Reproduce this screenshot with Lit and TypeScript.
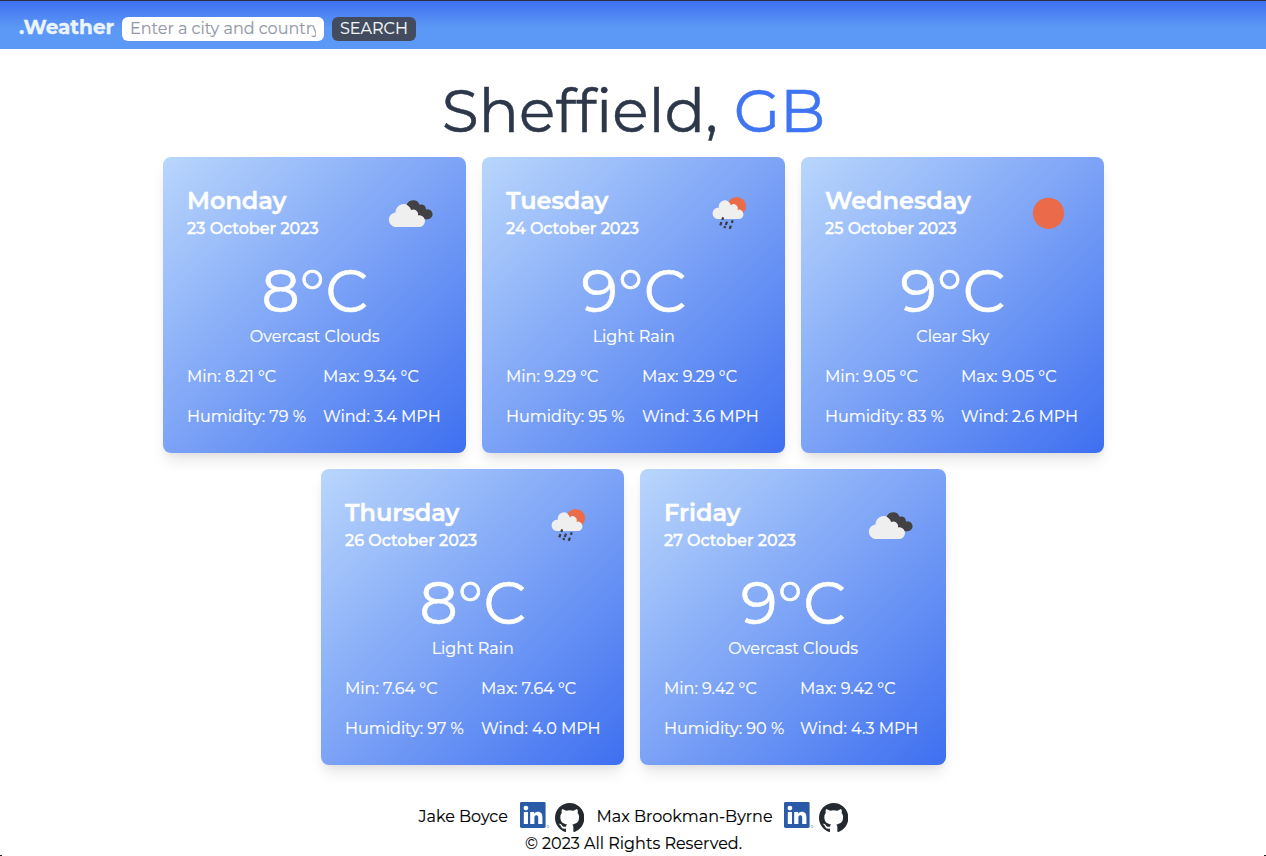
import { LitElement, html, svg, css } from "lit";

interface Day {
  name: string; date: string; temp: string; sky: string; icon: string;
  cells: string[];
}

const DAYS: Day[][] = [
  [
    { name: "Monday", date: "23 October 2023", temp: "8°C", sky: "Overcast Clouds", icon: "clouds",
      cells: ["Min: 8.21 °C", "Max: 9.34 °C", "Humidity: 79 %", "Wind: 3.4 MPH"] },
    { name: "Tuesday", date: "24 October 2023", temp: "9°C", sky: "Light Rain", icon: "rain",
      cells: ["Min: 9.29 °C", "Max: 9.29 °C", "Humidity: 95 %", "Wind: 3.6 MPH"] },
    { name: "Wednesday", date: "25 October 2023", temp: "9°C", sky: "Clear Sky", icon: "sun",
      cells: ["Min: 9.05 °C", "Max: 9.05 °C", "Humidity: 83 %", "Wind: 2.6 MPH"] },
  ],
  [
    { name: "Thursday", date: "26 October 2023", temp: "8°C", sky: "Light Rain", icon: "rain",
      cells: ["Min: 7.64 °C", "Max: 7.64 °C", "Humidity: 97 %", "Wind: 4.0 MPH"] },
    { name: "Friday", date: "27 October 2023", temp: "9°C", sky: "Overcast Clouds", icon: "clouds",
      cells: ["Min: 9.42 °C", "Max: 9.42 °C", "Humidity: 90 %", "Wind: 4.3 MPH"] },
  ],
];

const ICONS: Record<string, unknown> = {
  clouds: svg`<g transform="translate(387.5 198.6)">
    <path fill="#424244" d="M19 7A6.8 6.8 0 0 1 32 6.2A4.6 4.6 0 0 1 38.4 10.9A5 5 0 1 1 39.8 20.6H28Z"/>
    <path fill="#efefef" d="M7.4 28.3A7.2 7.2 0 0 1 8 14A8 8 0 0 1 23.7 11.4A4.7 4.7 0 0 1 30.4 16.7A5.9 5.9 0 1 1 32.8 28.3Z"/></g>`,
  rain: svg`<circle cx="736.7" cy="206.2" r="9.3" fill="#eb6c4a"/>
    <path fill="#efefef" d="M717.6 219A5.6 5.6 0 0 1 718.7 207.8A6.2 6.2 0 0 1 730.9 205.4A4 4 0 0 1 737.4 209.8A4.7 4.7 0 1 1 738.6 219Z"/>
    <g stroke="#3a3a3e" stroke-width="2.2"><path d="M723.2 217.3l-.9 2.6M721.4 222.2l-1.1 3.2M727 221.6l-1.2 3.4M732.7 220.4l-.8 2.4M725.1 226l-.7 2.2M730.9 225.7l-1.2 3.2"/></g>`,
  sun: svg`<circle cx="1048.5" cy="213.3" r="15.6" fill="#ea6a49"/>`,
};
const BOX: Record<string, string> = { clouds: "385 189 50 50", rain: "704 189 50 50", sun: "1023 189 50 50" };

const linkedin = html`<svg class="li" viewBox="0 0 30 30">
  <rect width="25.6" height="26" rx="1.4" fill="#2a5ba9"/>
  <g fill="#fff"><circle cx="5.9" cy="6.1" r="2.4"/><path d="M3.8 10H8V22H3.8ZM10.2 10H14.2V11.7C15 10.4 16.1 9.7 17.8 9.7C21.4 9.7 22.4 12.1 22.4 15.4V22H18.2V16.1C18.2 14.4 18 13.2 16.4 13.2C14.8 13.2 14.4 14.3 14.4 16V22H10.2Z"/></g>
  <circle cx="28" cy="24.6" r="1.1" fill="none" stroke="#9db4d8" stroke-width=".8"/></svg>`;
const github = html`<svg class="gh" viewBox="0 0 98 96"><path fill="#24292f" fill-rule="evenodd" d="M48.854 0C21.839 0 0 22 0 49.217c0 21.756 13.993 40.172 33.405 46.69 2.427.49 3.316-1.059 3.316-2.362 0-1.141-.08-5.052-.08-9.127-13.59 2.934-16.42-5.867-16.42-5.867-2.184-5.704-5.42-7.17-5.42-7.17-4.448-3.015.324-3.015.324-3.015 4.934.326 7.523 5.052 7.523 5.052 4.367 7.496 11.404 5.378 14.235 4.074.404-3.178 1.699-5.378 3.074-6.6-10.839-1.141-22.243-5.378-22.243-24.283 0-5.378 1.94-9.778 5.014-13.2-.485-1.222-2.184-6.275.486-13.038 0 0 4.125-1.304 13.426 5.052a46.97 46.97 0 0 1 12.214-1.63c4.125 0 8.33.571 12.213 1.63 9.302-6.356 13.427-5.052 13.427-5.052 2.67 6.763.97 11.816.485 13.038 3.155 3.422 5.015 7.822 5.015 13.2 0 18.905-11.404 23.06-22.324 24.283 1.78 1.548 3.316 4.481 3.316 9.126 0 6.6-.08 11.897-.08 13.526 0 1.304.89 2.853 3.316 2.364 19.412-6.52 33.405-24.935 33.405-46.691C97.707 22 75.788 0 48.854 0z"/></svg>`;

class WeatherCard extends LitElement {
  static properties = { day: { attribute: false } };
  declare day: Day;
  static styles = css`
    :host { display: block; box-sizing: border-box; height: 296px; padding: 24px 23px 24px 24.5px; border-radius: 8px; color: #fff;
      -webkit-text-stroke: .2px currentColor;
      background: linear-gradient(to bottom right, #b9d6fc, #3e6ff0);
      box-shadow: 0 10px 15px -3px rgba(0,0,0,.1), 0 4px 6px -2px rgba(0,0,0,.05); }
    .top { display: flex; justify-content: space-between; padding-top: 4px; height: 56px; }
    .name { display: block; font-size: 24px; line-height: 32px; font-weight: 600; -webkit-text-stroke-width: .4px; }
    .date { display: block; line-height: 24px; font-weight: 500; -webkit-text-stroke-width: .35px; }
    svg { width: 50px; height: 50px; margin: 4px 8px 0 0; flex: none; -webkit-text-stroke-width: 0; }
    .mid { display: flex; flex-direction: column; align-items: center; padding-top: 18px; }
    .temp { font-size: 60px; line-height: 64px; height: 66px; -webkit-text-stroke-width: .6px; }
    .sky { line-height: 24px; }
    .grid { display: grid; grid-template-columns: 120px 1fr; column-gap: 16px; row-gap: 16px; padding-top: 16px; line-height: 24px; white-space: nowrap; }
  `;
  render() {
    const d = this.day;
    return html`
      <div class="top">
        <div><span class="name">${d.name}</span><span class="date">${d.date}</span></div>
        <svg viewBox=${BOX[d.icon]}>${ICONS[d.icon]}</svg>
      </div>
      <div class="mid"><span class="temp">${d.temp}</span><span class="sky">${d.sky}</span></div>
      <div class="grid">${d.cells.map((c) => html`<span>${c}</span>`)}</div>`;
  }
}
customElements.define("weather-card", WeatherCard);

class AppRoot extends LitElement {
  static styles = css`
    :host { display: flex; flex-direction: column; box-sizing: border-box; height: 856px; overflow: hidden;
      background: linear-gradient(#222, #222) 0 100% / 2px 1px no-repeat, linear-gradient(#222, #222) 100% 100% / 2px 1px no-repeat, #fff;
      font-family: Montserrat, Inter, sans-serif; font-size: 16px; color: #000; }
    header { display: flex; align-items: center; gap: 8px; box-sizing: border-box; height: 49px; padding: 7px 19px 0;
      border-top: 1px solid #2b3042; background: linear-gradient(#3f70f1, #5c98f5 55%); }
    .logo { width: 95px; font-size: 20px; line-height: 28px; font-weight: 700; color: #ebf4ff; margin-top: -3px; -webkit-text-stroke: .3px #ebf4ff; }
    input { box-sizing: border-box; width: 202px; height: 24px; padding: 0 8px; border: 0; border-radius: 6px; background: #fff;
      font: inherit; outline: none; }
    input::placeholder { color: #9299a6; opacity: 1; -webkit-text-stroke: .15px #9299a6; }
    button { width: 84px; height: 24px; padding: 0; border: 0; border-radius: 6px; background: #424c5e; color: #f3f6fa;
      font: inherit; -webkit-text-stroke: .15px #f3f6fa; }
    h1 { margin: 0; height: 108px; padding: 30px 0 0 1px; box-sizing: border-box; text-align: center; font-size: 60px; line-height: 64px; font-weight: 400;
      color: #2d374a; white-space: nowrap; -webkit-text-stroke: .5px currentColor; }
    .cc { color: #3f74f2; }
    .rows { display: grid; justify-content: center; row-gap: 16px; }
    .row { display: grid; justify-content: center; column-gap: 16px; grid-template-columns: repeat(3, 303px); }
    .row.two { grid-template-columns: 303px 306px; }
    footer { padding-top: 36px; -webkit-text-stroke: .15px currentColor; }
    .people { display: grid; grid-template-columns: 101.5px 34.5px 42px 187.5px 34.5px 30px; justify-content: center; height: 30px; line-height: 32px; padding-left: 1px; white-space: nowrap; }
    .li { width: 30px; height: 30px; margin-top: 1px; }
    .gh { width: 29.5px; height: 29px; margin-top: 1.5px; }
    .copy { text-align: center; line-height: 24px; margin-top: 1px; padding-left: 1px; }
  `;
  render() {
    return html`
      <header>
        <span class="logo">.Weather</span>
        <input placeholder="Enter a city and country" />
        <button>SEARCH</button>
      </header>
      <h1>Sheffield, <span class="cc">GB</span></h1>
      <div class="rows">
        ${DAYS.map((r) => html`<div class="row ${r.length === 2 ? "two" : ""}">${r.map((d) => html`<weather-card .day=${d}></weather-card>`)}</div>`)}
      </div>
      <footer>
        <div class="people">
          <span>Jake Boyce</span>${linkedin}${github}
          <span>Max Brookman-Byrne</span>${linkedin}${github}
        </div>
        <div class="copy">© 2023 All Rights Reserved.</div>
      </footer>`;
  }
}
customElements.define("app-root", AppRoot);
